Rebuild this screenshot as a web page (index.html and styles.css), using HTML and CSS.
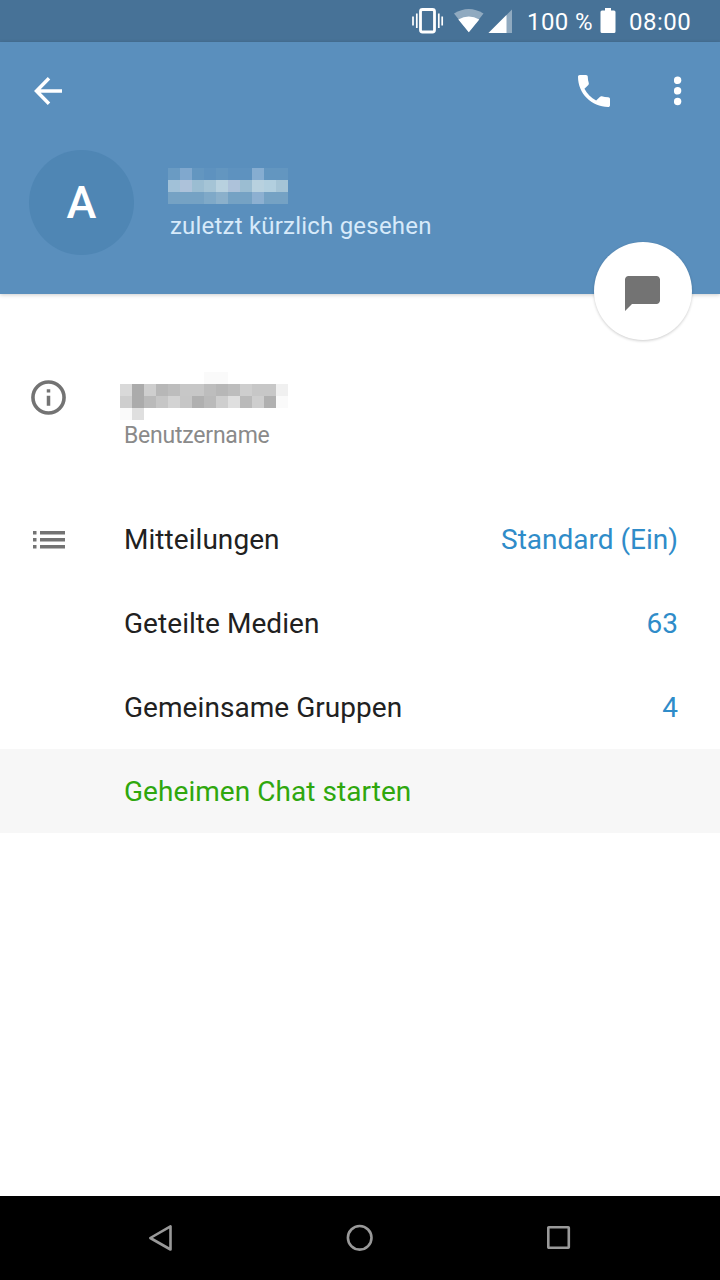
FILE: index.html
```html
<!DOCTYPE html>
<html lang="de">
<head>
<meta charset="utf-8">
<title>Profil</title>
<link rel="stylesheet" href="styles.css">
</head>
<body>
<div class="screen">
  <div class="status">
    <svg class="vibrate" width="32" height="26" viewBox="412 8 32 26" fill="none" stroke="#fff">
      <rect x="420.5" y="9.500" width="14" height="22.500" rx="2" stroke-width="2.800"/>
      <path d="M416.800 13.500V28M438.800 13.500V28M413 16.500V25.500M442.200 16.500V25.500" stroke-width="1.700"/>
    </svg>
    <svg class="wifi" width="30" height="24" viewBox="454 9 30 24" fill="#fff">
      <path d="M454 13.500Q468.800 4.500 483.500 13.500L468.800 32.300Z" opacity=".4"/>
      <path d="M458.300 19.500Q468.800 13.500 479.300 19.500L468.800 32.300Z"/>
    </svg>
    <svg class="signal" width="24" height="24" viewBox="488 9 24 24" fill="#fff">
      <path d="M488.500 33L512 9.500V33Z" opacity=".4"/>
      <path d="M488.500 33L506.500 15V33Z"/>
    </svg>
    <span class="percent">100 %</span>
    <svg class="battery" width="16" height="25" viewBox="0 0 16 25" fill="#fff"><path d="M5 0H11V2.500H14Q15.500 2.500 15.500 4V23.500Q15.500 25 14 25H2Q.5 25 .5 23.500V4Q.5 2.500 2 2.500H5Z"/></svg>
    <span class="time">08:00</span>
  </div>
  <header class="header">
    <div class="toolbar">
      <svg width="28" height="28" viewBox="0 0 28 28" fill="none" stroke="#fff" stroke-width="3.500"><path d="M28 14H3M15 1.300L2.500 14L15 26.700"/></svg>
      <svg class="phone" width="32" height="32" viewBox="3 3 18 18" fill="#fff"><path d="M6.620 10.790c1.440 2.830 3.760 5.140 6.590 6.590l2.200-2.200c.27-.27.67-.36 1.020-.24 1.120.37 2.330.57 3.570.57.55 0 1 .45 1 1V20c0 .55-.45 1-1 1C10.610 21 3 13.390 3 4c0-.55.45-1 1-1h3.500c.55 0 1 .45 1 1 0 1.250.2 2.450.57 3.570.11.35.03.74-.25 1.020l-2.200 2.200z"/></svg>
      <svg width="8" height="30" viewBox="0 0 8 30" fill="#fff"><circle cx="3.600" cy="4.300" r="3.700"/><circle cx="3.600" cy="14.800" r="3.700"/><circle cx="3.600" cy="25.500" r="3.700"/></svg>
    </div>
    <div class="person">
      <div class="avatar">A</div>
      <div class="who">
        <svg class="name" width="120" height="36" viewBox="0 0 10 3" shape-rendering="crispEdges">
          <path fill="#6a9bc3" d="M0 0h1v1h-1z"/><path fill="#80a8ce" d="M1 0h1v1h-1z"/><path fill="#6396c0" d="M2 0h1v1h-1zM4 0h1v1h-1zM8 0h2v1h-2z"/><path fill="#5e92bf" d="M3 0h1v1h-1zM5 0h2v1h-2z"/><path fill="#86add1" d="M7 0h1v1h-1z"/>
          <path fill="#a1c1d8" d="M0 1h1v1h-1z"/><path fill="#adc2da" d="M1 1h1v1h-1zM5 1h1v1h-1z"/><path fill="#9bbdd2" d="M2 1h1v1h-1zM6 1h1v1h-1z"/><path fill="#a5c4d6" d="M3 1h1v1h-1zM9 1h1v1h-1z"/><path fill="#b8d1df" d="M4 1h1v1h-1zM7 1h1v1h-1z"/><path fill="#b2cfdf" d="M8 1h1v1h-1z"/>
          <path fill="#75a2c4" d="M0 2h3v1h-3zM5 2h2v1h-2zM8 2h2v1h-2z"/><path fill="#7fa9c8" d="M3 2h1v1h-1z"/><path fill="#8bb0cb" d="M4 2h1v1h-1z"/><path fill="#8db0d1" d="M7 2h1v1h-1z"/>
        </svg>
        <div class="seen">zuletzt kürzlich gesehen</div>
      </div>
    </div>
    <div class="fab"><svg width="35" height="35" viewBox="2 2 20 20" fill="#737373"><path d="M4 2h16c1.100 0 2 .9 2 2v12c0 1.100-.9 2-2 2H6l-4 4V4c0-1.100.9-2 2-2z"/></svg></div>
  </header>
  <main class="content">
    <div class="user">
      <svg class="info" width="35" height="35" viewBox="0 0 36 36"><circle cx="18" cy="18" r="16" fill="none" stroke="#737373" stroke-width="3.700"/><path fill="#737373" d="M16.200 9.500h3.600v3.400h-3.600zM16.200 16.200h3.600v10.300h-3.600z"/></svg>
      <div class="user-text">
        <svg class="username" width="168" height="48" viewBox="0 0 14 4" shape-rendering="crispEdges">
          <path fill="#fafafa" d="M7 0h2v1h-2zM13 2h1v1h-1zM0 3h1v1h-1z"/>
          <path fill="#d9d9d9" d="M0 1h1v1h-1z"/><path fill="#ababab" d="M1 1h1v2h-1z"/><path fill="#cecece" d="M2 1h1v1h-1zM10 1h1v1h-1z"/><path fill="#b7b7b7" d="M3 1h1v1h-1zM8 1h1v1h-1z"/><path fill="#bdbdbd" d="M4 1h1v1h-1zM7 1h1v1h-1zM9 1h1v1h-1z"/><path fill="#c7c7c7" d="M5 1h2v1h-2zM11 1h2v1h-2z"/><path fill="#f0f0f0" d="M13 1h1v1h-1z"/>
          <path fill="#cecece" d="M0 2h1v1h-1zM8 2h1v1h-1zM11 2h1v1h-1z"/><path fill="#bababa" d="M2 2h1v1h-1zM7 2h1v1h-1zM10 2h1v1h-1z"/><path fill="#c6c6c6" d="M3 2h1v1h-1zM5 2h1v1h-1z"/><path fill="#d3d3d3" d="M4 2h1v1h-1z"/><path fill="#b0b0b0" d="M6 2h1v1h-1zM12 2h1v1h-1z"/><path fill="#dfdfdf" d="M9 2h1v1h-1zM1 3h1v1h-1z"/>
        </svg>
        <div class="label">Benutzername</div>
      </div>
    </div>
    <div class="row">
      <svg class="list" width="32" height="18" viewBox="0 0 32 18" fill="#737373"><path d="M0 0h3.500v3.500H0zM7 0h25v3.500H7zM0 7h3.500v3.500H0zM7 7h25v3.500H7zM0 14h3.500v3.500H0zM7 14h25v3.500H7z"/></svg>
      <span class="title">Mitteilungen</span><span class="value">Standard (Ein)</span>
    </div>
    <div class="row"><span class="title">Geteilte Medien</span><span class="value">63</span></div>
    <div class="row"><span class="title">Gemeinsame Gruppen</span><span class="value">4</span></div>
    <div class="row secret"><span class="title">Geheimen Chat starten</span></div>
  </main>
  <nav class="nav">
    <svg width="28" height="28" viewBox="0 0 28 28"><path d="M23.500 2.300V25.500L3.300 14Z"/></svg>
    <svg width="28" height="28" viewBox="0 0 28 28"><circle cx="13.700" cy="13.800" r="11.800"/></svg>
    <svg width="28" height="28" viewBox="0 0 28 28"><rect x="3.300" y="3.200" width="20.500" height="20.500" rx=".5"/></svg>
  </nav>
</div>
</body>
</html>
```
FILE: styles.css
```css
* { box-sizing: border-box; }
body { margin: 0; background: #fff; font-family: Roboto, sans-serif; }
svg { display: block; flex: none; }
.screen { width: 720px; height: 1280px; display: flex; flex-direction: column; }
.status { height: 42px; flex: none; display: flex; align-items: center; padding-left: 412px; background: #477297; color: #fff; font-size: 24px; white-space: nowrap; }
.wifi { margin-left: 10px; }
.signal { margin-left: 4px; }
.percent { width: 73px; margin-left: 15px; padding-top: 2px; letter-spacing: .4px; }
.battery { margin-bottom: 1px; }
.time { margin-left: 13px; padding-top: 2px; letter-spacing: .5px; }
.header { position: relative; height: 252px; flex: none; background: #5a8fbd; box-shadow: 0 1px 4px rgba(0,0,0,.2); }
.toolbar { height: 97px; display: flex; align-items: center; padding: 0 38px 0 34px; }
.phone { margin: 0 64px 0 auto; }
.person { display: flex; padding: 11px 0 0 29px; }
.avatar { width: 105px; height: 105px; border-radius: 50%; background: #4f86b4; color: #fff; font-size: 45px; font-weight: 500; line-height: 105px; text-align: center; }
.who { padding: 18px 0 0 34px; }
.seen { margin: 7px 0 0 2px; font-size: 24px; line-height: 30px; letter-spacing: .21px; color: #d7eafa; }
.fab { position: absolute; right: 28px; bottom: -46px; width: 98px; height: 98px; border-radius: 50%; background: #fff; display: flex; align-items: center; justify-content: center; padding: 5px 1px 0 0; box-shadow: 0 1px 3px rgba(0,0,0,.2); }
.content { flex: 1; }
.user { height: 203px; display: flex; padding: 78px 0 0 31px; }
.info { margin-top: 8px; }
.user-text { margin-left: 54px; }
.label { margin: 1px 0 0 4px; font-size: 23px; line-height: 30px; letter-spacing: -.22px; color: #8a8a8a; }
.row { height: 84px; display: flex; align-items: center; padding: 0 42px 0 124px; font-size: 28px; color: #212121; }
.title { letter-spacing: .05px; }
.list { margin: 1px 59px 0 -91px; }
.value { margin-left: auto; color: #2f8cc9; }
.secret { background: #f7f7f7; }
.secret .title { color: #2fa70d; }
.nav { height: 84px; flex: none; background: #000; display: flex; align-items: center; justify-content: space-between; padding: 0 147px; }
.nav svg { fill: none; stroke: #999; stroke-width: 2.6; stroke-linejoin: round; }
```
